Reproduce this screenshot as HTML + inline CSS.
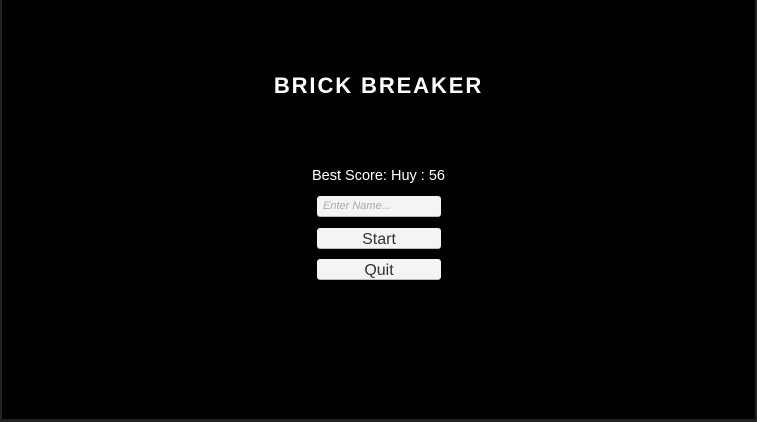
<!DOCTYPE html>
<html><head><style>
html,body{margin:0;padding:0;width:757px;height:422px;background:#222;overflow:hidden;font-family:"Liberation Sans",sans-serif}
#s{position:absolute;left:2px;top:0;width:753px;height:419px;background:#000}
.t{position:absolute;left:0;width:757px;text-align:center;color:#fff}
.b{position:absolute;left:317px;width:124px;height:20px;background:#f4f4f4;border-radius:3px;border-bottom:1px solid #bbb;text-align:center;color:#333;font-size:16px;line-height:23px}
</style></head><body>
<div id="s"></div>
<div class="t" style="top:73px;font-size:22px;font-weight:bold;letter-spacing:1.9px">BRICK BREAKER</div>
<div class="t" style="top:168px;font-size:14.5px">Best Score: Huy : 56</div>
<div class="b" style="top:196px;text-align:left;font-size:11px;font-style:italic;color:#aaa;padding-left:6px;width:118px;line-height:21px">Enter Name...</div>
<div class="b" style="top:228px">Start</div>
<div class="b" style="top:259px">Quit</div>
</body></html>
